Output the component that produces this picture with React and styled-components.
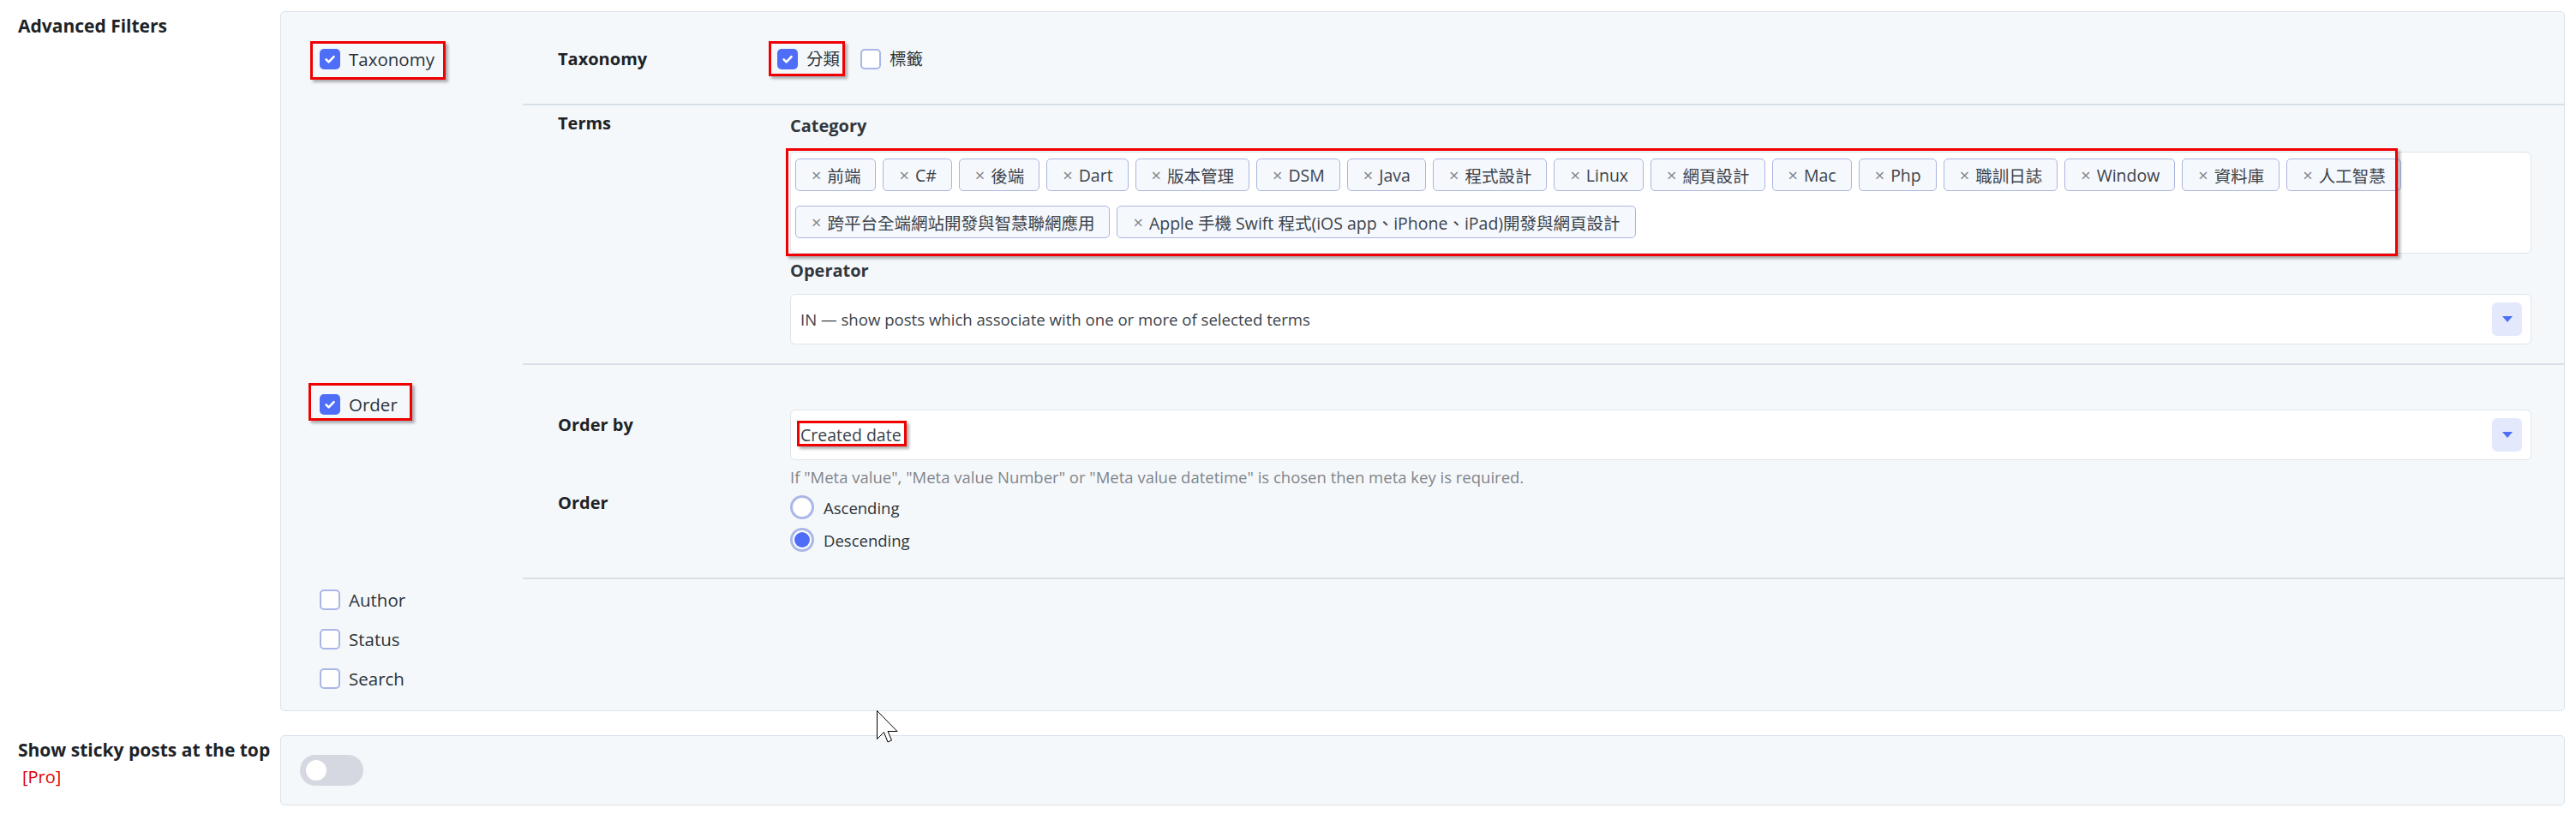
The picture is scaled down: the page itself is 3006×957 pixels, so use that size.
import React from 'react';
import styled, { createGlobalStyle } from 'styled-components';

const Global = createGlobalStyle`
  html, body { margin: 0; padding: 0; background: #fff; }
  body {
    font-family: "Open Sans", "Noto Sans CJK TC", sans-serif;
    color: #2c3338;
    overflow: hidden;
  }
  * { box-sizing: border-box; }
`;

const Page = styled.div`
  position: relative;
  padding: 13px 13px 0 21px;
  display: flex;
  flex-direction: column;
  gap: 28px;
`;

const Section = styled.section`
  display: grid;
  grid-template-columns: 306px 1fr;
`;

const SectionLabel = styled.div`
  padding-top: 2px;
  font-weight: 700;
  font-size: 21px;
  line-height: 30px;
  color: #1d2327;
`;

const ProTag = styled.span`
  display: block;
  padding-left: 5px;
  margin-top: 2px;
  color: #e00000;
  font-weight: 400;
  font-size: 20px;
  line-height: 30px;
`;

const Panel = styled.div`
  background: #f5f8fb;
  border: 1px solid #dae2ea;
  border-radius: 5px;
  padding: ${p => p.$pad || '0'};
`;

const FilterItem = styled.div`
  display: grid;
  grid-template-columns: 282px 1fr;
`;

const FilterToggle = styled.div`
  padding: ${p => p.$top}px 0 0 45px;
`;

const SimpleList = styled.div`
  display: flex;
  flex-direction: column;
  align-items: flex-start;
  gap: 16px;
  padding: 9px 0 22px 45px;
`;

const CheckLabel = styled.label`
  display: inline-flex;
  align-items: center;
  gap: 10px;
  font-size: ${p => p.$size || 20.5}px;
  line-height: 30px;
  color: #2c3338;
  white-space: nowrap;
`;

const Box = styled.span`
  width: 24px;
  height: 24px;
  flex: none;
  border-radius: 5px;
  display: inline-flex;
  align-items: center;
  justify-content: center;
  background: ${p => (p.$on ? '#4f6ef7' : '#fff')};
  border: ${p => (p.$on ? 'none' : '2px solid #a9b6e6')};
`;

const Marked = styled.span`
  position: relative;
  display: ${p => (p.$block ? 'block' : 'inline-flex')};
  margin-top: ${p => p.$mt || 0}px;
  &::after {
    content: '';
    position: absolute;
    top: ${p => p.$t}px;
    right: ${p => p.$r}px;
    bottom: ${p => p.$b}px;
    left: ${p => p.$l}px;
    border: 3px solid #f00000;
    box-shadow: 3px 3px 3px rgba(0, 0, 0, 0.3);
    pointer-events: none;
  }
`;

const Settings = styled.div`
  border-bottom: 2px solid #d8e0e7;
`;

const SettingRow = styled.div`
  display: grid;
  grid-template-columns: 271px 1fr;
  padding: ${p => p.$pad};
  border-bottom: ${p => (p.$divider ? '2px solid #d8e0e7' : 'none')};
`;

const RowLabel = styled.div`
  font-weight: 700;
  font-size: 20px;
  line-height: 30px;
  color: #1d2327;
  padding-top: ${p => p.$top || 0}px;
`;

const Field = styled.div`
  display: flex;
  flex-direction: column;
  min-width: 0;
`;

const FieldLabel = styled.div`
  font-weight: 700;
  font-size: 20px;
  line-height: 30px;
  color: #32373c;
  margin-top: ${p => p.$mt || 0}px;
`;

const OptionRow = styled.div`
  display: flex;
  align-items: center;
  gap: 24px;
  margin-left: -15px;
`;

const TagBox = styled.div`
  background: #fff;
  border: 1px solid #dfe5ea;
  border-radius: 6px;
  padding: 7px 8px 17px 5px;
  display: flex;
  flex-wrap: wrap;
  column-gap: 8px;
  row-gap: 17px;
`;

const Chip = styled.span`
  display: inline-flex;
  align-items: center;
  height: 38px;
  padding: 0 17px 0 18px;
  border: 1px solid #aab5df;
  border-radius: 5px;
  background: #f5f8fd;
  font-size: 19.5px;
  color: #3c434a;
  white-space: nowrap;
`;

const ChipX = styled.span`
  color: #7f8388;
  font-size: 20px;
  margin-right: 7px;
`;

const Select = styled.div`
  margin-top: ${p => p.$mt || 0}px;
  height: 59px;
  background: #fff;
  border: 1px solid #dfe5ea;
  border-radius: 6px;
  display: flex;
  align-items: center;
  justify-content: space-between;
  padding: 0 10px 0 11px;
  line-height: 30px;
  color: #3c434a;
`;

const SelectText = styled.span`
  font-size: ${p => p.$size || 19.5}px;
  white-space: nowrap;
`;

const DropBtn = styled.span`
  width: 35px;
  height: 39px;
  flex: none;
  border-radius: 6px;
  background: #e3e8fd;
  display: flex;
  align-items: center;
  justify-content: center;
  &::before {
    content: '';
    border-left: 6px solid transparent;
    border-right: 6px solid transparent;
    border-top: 7px solid #4f6ef7;
  }
`;

const Help = styled.p`
  margin: 6px 0 0;
  font-size: 18.5px;
  line-height: 28px;
  color: #80858a;
`;

const RadioList = styled.div`
  margin-top: 7px;
  display: flex;
  flex-direction: column;
  gap: 10px;
`;

const RadioOption = styled.label`
  display: flex;
  align-items: center;
  gap: 11px;
  height: 28px;
  font-size: 18.5px;
  color: #2c3338;
`;

const RadioDot = styled.span`
  width: 28px;
  height: 28px;
  flex: none;
  border-radius: 50%;
  border: 3px solid #aab7e7;
  background: #fff;
  display: flex;
  align-items: center;
  justify-content: center;
  &::after {
    content: '';
    width: 18px;
    height: 18px;
    border-radius: 50%;
    background: ${p => (p.$on ? '#4f6ef7' : 'transparent')};
  }
`;

const Switch = styled.span`
  width: 74px;
  height: 36px;
  border-radius: 18px;
  background: #d5d8e0;
  display: flex;
  align-items: center;
  padding-left: 7px;
  &::before {
    content: '';
    width: 24px;
    height: 24px;
    border-radius: 50%;
    background: #fff;
  }
`;

const Cursor = styled.svg`
  position: absolute;
  left: 1023px;
  top: 829px;
  pointer-events: none;
`;

const Check = ({ on }) => (
  <Box $on={on}>
    {on && (
      <svg width="24" height="24" viewBox="0 0 24 24">
        <path d="M7.6 12.4 L10.6 15.4 L16.6 9.2" fill="none" stroke="#fff" strokeWidth="2.6" strokeLinecap="round" strokeLinejoin="round" />
      </svg>
    )}
  </Box>
);

const tags = [
  '前端', 'C#', '後端', 'Dart', '版本管理', 'DSM', 'Java', '程式設計', 'Linux', '網頁設計',
  'Mac', 'Php', '職訓日誌', 'Window', '資料庫', '人工智慧', '跨平台全端網站開發與智慧聯網應用',
  'Apple 手機 Swift 程式(iOS app、iPhone、iPad)開發與網頁設計',
];

export default function App() {
  return (
    <>
      <Global />
      <Page>
        <Section>
          <SectionLabel>Advanced Filters</SectionLabel>
          <Panel>
            <FilterItem>
              <FilterToggle $top={40}>
                <Marked $t={-6} $l={-11} $r={-13} $b={-9}>
                  <CheckLabel>
                    <Check on />
                    Taxonomy
                  </CheckLabel>
                </Marked>
              </FilterToggle>
              <Settings>
                <SettingRow $pad="40px 38px 37px 41px" $divider>
                  <RowLabel>Taxonomy</RowLabel>
                  <OptionRow>
                    <Marked $t={-6} $l={-10} $r={-6} $b={-5}>
                      <CheckLabel $size={19.5}>
                        <Check on />
                        分類
                      </CheckLabel>
                    </Marked>
                    <CheckLabel $size={19.5}>
                      <Check />
                      標籤
                    </CheckLabel>
                  </OptionRow>
                </SettingRow>
                <SettingRow $pad="6px 38px 22px 41px">
                  <RowLabel>Terms</RowLabel>
                  <Field>
                    <FieldLabel $mt={3}>Category</FieldLabel>
                    <Marked $block $mt={15} $t={-4} $l={-5} $r={156} $b={-3}>
                      <TagBox>
                        {tags.map(t => (
                          <Chip key={t}>
                            <ChipX>×</ChipX>
                            {t}
                          </Chip>
                        ))}
                      </TagBox>
                    </Marked>
                    <FieldLabel $mt={5}>Operator</FieldLabel>
                    <Select $mt={12}>
                      <SelectText $size={18.6}>IN — show posts which associate with one or more of selected terms</SelectText>
                      <DropBtn />
                    </Select>
                  </Field>
                </SettingRow>
              </Settings>
            </FilterItem>

            <FilterItem>
              <FilterToggle $top={31}>
                <Marked $t={-10} $l={-13} $r={-17} $b={-4}>
                  <CheckLabel>
                    <Check on />
                    Order
                  </CheckLabel>
                </Marked>
              </FilterToggle>
              <Settings>
                <SettingRow $pad="52px 38px 0 41px">
                  <RowLabel $top={3}>Order by</RowLabel>
                  <Field>
                    <Select>
                      <Marked $t={-2} $l={-4} $r={-6} $b={2}>
                        <SelectText>Created date</SelectText>
                      </Marked>
                      <DropBtn />
                    </Select>
                    <Help>If "Meta value", "Meta value Number" or "Meta value datetime" is chosen then meta key is required.</Help>
                  </Field>
                </SettingRow>
                <SettingRow $pad="0 38px 30px 41px">
                  <RowLabel $top={1}>Order</RowLabel>
                  <RadioList>
                    <RadioOption>
                      <RadioDot />
                      Ascending
                    </RadioOption>
                    <RadioOption>
                      <RadioDot $on />
                      Descending
                    </RadioOption>
                  </RadioList>
                </SettingRow>
              </Settings>
            </FilterItem>

            <SimpleList>
              <CheckLabel>
                <Check />
                Author
              </CheckLabel>
              <CheckLabel>
                <Check />
                Status
              </CheckLabel>
              <CheckLabel>
                <Check />
                Search
              </CheckLabel>
            </SimpleList>
          </Panel>
        </Section>

        <Section>
          <SectionLabel>
            Show sticky posts at the top
            <ProTag>[Pro]</ProTag>
          </SectionLabel>
          <Panel $pad="22px">
            <Switch />
          </Panel>
        </Section>

        <Cursor width="26" height="40" viewBox="0 0 26 40">
          <path d="M0.5 0.5 L0.5 33.5 L8.5 25.5 L13 37 L17.5 35 L13 24.5 L24 24.5 Z" fill="#fff" stroke="#000" strokeWidth="1" strokeLinejoin="miter" />
        </Cursor>
      </Page>
    </>
  );
}
